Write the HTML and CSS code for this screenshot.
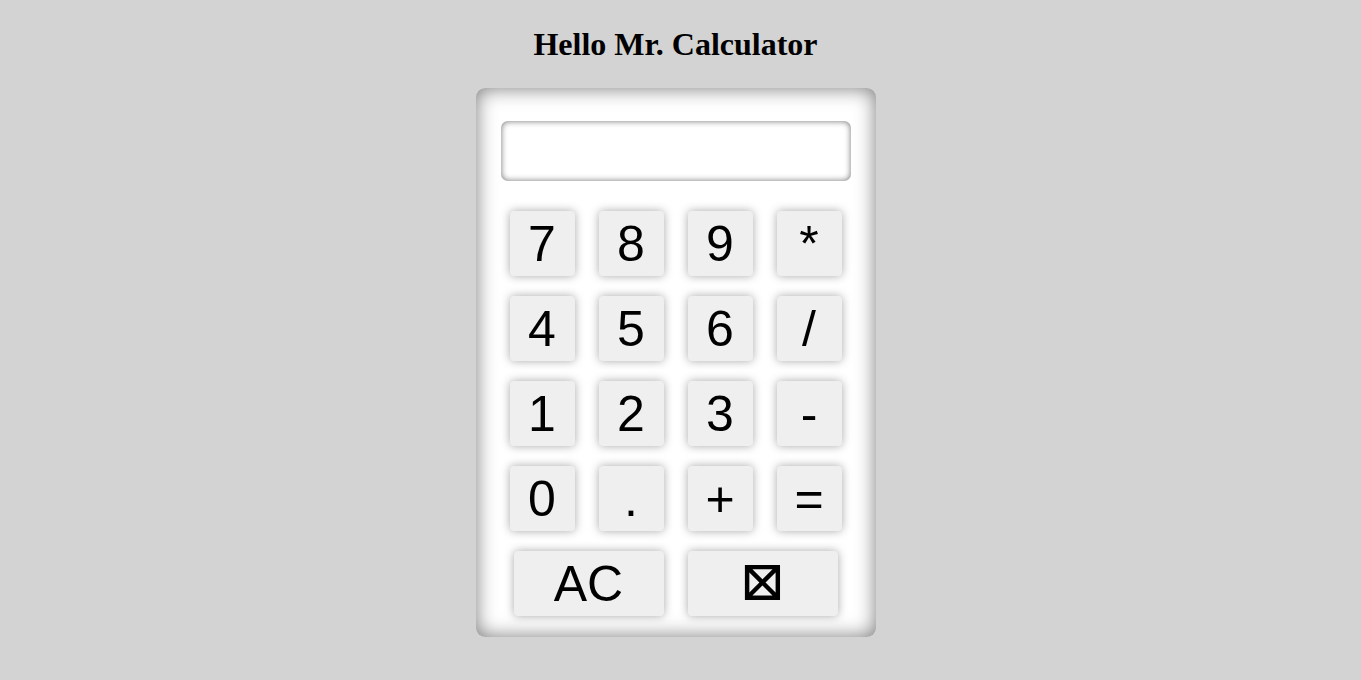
FILE: index.html
```html
<!DOCTYPE html>
<html>
<head>
<meta charset="utf-8">
<title>Calculator</title>
<link rel="stylesheet" href="styles.css">
</head>
<body>
<h1 class="title">Hello Mr. Calculator</h1>
<div class="calc">
  <input class="display" type="text" value="">
  <div class="keys">
    <button class="key">7</button>
    <button class="key">8</button>
    <button class="key">9</button>
    <button class="key">*</button>
    <button class="key">4</button>
    <button class="key">5</button>
    <button class="key">6</button>
    <button class="key">/</button>
    <button class="key">1</button>
    <button class="key">2</button>
    <button class="key">3</button>
    <button class="key">-</button>
    <button class="key">0</button>
    <button class="key">.</button>
    <button class="key">+</button>
    <button class="key">=</button>
  </div>
  <div class="bottom">
    <button class="key wide">AC</button>
    <button class="key wide sym">&#x22A0;</button>
  </div>
</div>
</body>
</html>
```

FILE: styles.css
```css
html {
  background: #d3d3d3;
}
body {
  margin: 0 10px 0 0;
  padding-bottom: 56px;
  font-family: "Liberation Serif", "Times New Roman", serif;
}
.title {
  margin: 26px 0 25px;
  text-align: center;
  font-size: 32px;
  font-weight: bold;
  color: #000;
}
.calc {
  width: 400px;
  height: 549px;
  box-sizing: border-box;
  margin: 0 auto;
  padding-top: 33px;
  background: #fff;
  border-radius: 9px;
  box-shadow: inset 0 0 20px #777;
  display: flex;
  flex-direction: column;
  align-items: center;
}
.display {
  width: 350px;
  height: 60px;
  box-sizing: border-box;
  border: none;
  border-radius: 7px;
  background: #fff;
  box-shadow: inset 0 0 6px #707070;
  outline: none;
  margin: 0 0 30px;
  padding: 0 10px;
  font-size: 30px;
}
.keys {
  display: grid;
  grid-template-columns: repeat(4, 65px);
  grid-auto-rows: 65px;
  column-gap: 24px;
  row-gap: 20px;
}
.key {
  width: 65px;
  height: 65px;
  border: none;
  border-radius: 4px;
  background: #efefef;
  box-shadow: 0 0 10px #a8a8a8;
  font-family: "Liberation Sans", Arial, sans-serif;
  font-size: 50px;
  color: #000;
  padding: 0;
  line-height: 1;
  display: flex;
  align-items: center;
  justify-content: center;
}
.bottom {
  display: flex;
  gap: 24px;
  margin-top: 20px;
}
.key.wide {
  width: 150px;
}
.key.sym {
  font-family: "DejaVu Serif", serif;
  font-size: 56px;
  padding-bottom: 6px;
}
```
